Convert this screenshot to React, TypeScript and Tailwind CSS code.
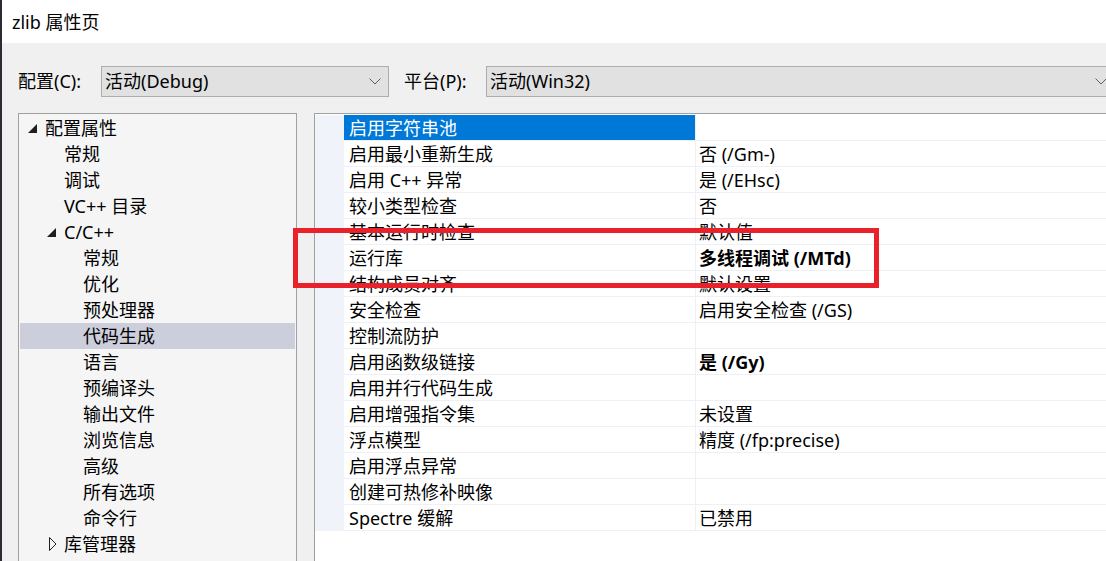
import React from "react";

type TreeItem = { label: string; level: 0 | 1 | 2; arrow?: "open" | "closed"; selected?: boolean };

const tree: TreeItem[] = [
  { label: "配置属性", level: 0, arrow: "open" },
  { label: "常规", level: 1 },
  { label: "调试", level: 1 },
  { label: "VC++ 目录", level: 1 },
  { label: "C/C++", level: 1, arrow: "open" },
  { label: "常规", level: 2 },
  { label: "优化", level: 2 },
  { label: "预处理器", level: 2 },
  { label: "代码生成", level: 2, selected: true },
  { label: "语言", level: 2 },
  { label: "预编译头", level: 2 },
  { label: "输出文件", level: 2 },
  { label: "浏览信息", level: 2 },
  { label: "高级", level: 2 },
  { label: "所有选项", level: 2 },
  { label: "命令行", level: 2 },
  { label: "库管理器", level: 1, arrow: "closed" },
];

const props: { name: string; value: string; bold?: boolean }[] = [
  { name: "启用字符串池", value: "" },
  { name: "启用最小重新生成", value: "否 (/Gm-)" },
  { name: "启用 C++ 异常", value: "是 (/EHsc)" },
  { name: "较小类型检查", value: "否" },
  { name: "基本运行时检查", value: "默认值" },
  { name: "运行库", value: "多线程调试 (/MTd)", bold: true },
  { name: "结构成员对齐", value: "默认设置" },
  { name: "安全检查", value: "启用安全检查 (/GS)" },
  { name: "控制流防护", value: "" },
  { name: "启用函数级链接", value: "是 (/Gy)", bold: true },
  { name: "启用并行代码生成", value: "" },
  { name: "启用增强指令集", value: "未设置" },
  { name: "浮点模型", value: "精度 (/fp:precise)" },
  { name: "启用浮点异常", value: "" },
  { name: "创建可热修补映像", value: "" },
  { name: "Spectre 缓解", value: "已禁用" },
];

const indent = ["pl-[6px]", "pl-[25px]", "pl-[44px]"];

function Chevron() {
  return (
    <svg width="12" height="7" viewBox="0 0 12 7" className="shrink-0">
      <path d="M0.5 0.5 L6 6 L11.5 0.5" fill="none" stroke="#5f5f5f" strokeWidth="1" />
    </svg>
  );
}

function Arrow({ kind }: { kind?: "open" | "closed" }) {
  if (kind === "open") {
    return (
      <svg width="9" height="9" viewBox="0 0 9 9" className="ml-[2px]">
        <polygon points="9,0 9,9 0,9" fill="#1e1e1e" />
      </svg>
    );
  }
  if (kind === "closed") {
    return (
      <svg width="8" height="14" viewBox="0 0 8 14" className="ml-[4px]">
        <polygon points="0.5,0.5 7,7 0.5,13.5" fill="none" stroke="#1e1e1e" strokeWidth="1" />
      </svg>
    );
  }
  return null;
}

export default function App() {
  return (
    <div className="relative flex w-[1106px] h-[561px] overflow-hidden bg-[#f0f0f0] text-black text-[18px] font-['Noto_Sans','Noto_Sans_CJK_SC',sans-serif]">
      {/* desktop edge */}
      <div className="w-[2px] bg-[#2a2d33]" />

      <div className="flex-1 flex flex-col min-w-0">
        {/* TITLE */}
        <div className="h-[43px] shrink-0 bg-white flex items-center pl-[10px] leading-none">
          zlib 属性页
        </div>

        {/* CONFIG ROW */}
        <div className="mt-[23px] h-[31px] shrink-0 flex items-center">
          <span className="w-[99px] pl-[16px] shrink-0 whitespace-nowrap">配置(C):</span>
          <div className="w-[288px] h-full shrink-0 flex items-center justify-between bg-[#e1e1e1] border border-[#adadad] pl-[3px] pr-[7px]">
            <span>活动(Debug)</span>
            <Chevron />
          </div>
          <span className="w-[82px] ml-[15px] shrink-0 whitespace-nowrap">平台(P):</span>
          <div className="w-[629px] h-full shrink-0 flex items-center justify-between bg-[#e1e1e1] border border-[#adadad] pl-[3px] pr-[7px]">
            <span>活动(Win32)</span>
            <Chevron />
          </div>
        </div>

        {/* PANES */}
        <div className="mt-[16px] flex-1 flex min-h-0">
          {/* TREE */}
          <div className="ml-[16px] w-[279px] shrink-0 bg-[#f5f5f5] border-l border-t border-r border-[#a0a0a0] pt-[1px] px-[1px]">
            {tree.map((t, i) => (
              <div
                key={i}
                className={`h-[26px] flex items-center leading-[27px] whitespace-nowrap ${indent[t.level]} ${
                  t.selected ? "bg-[#cccedb]" : ""
                }`}
              >
                <div className="w-[19px] flex items-center shrink-0">
                  <Arrow kind={t.arrow} />
                </div>
                <span className="pt-[1px]">{t.label}</span>
              </div>
            ))}
          </div>

          {/* PROPERTY GRID */}
          <div className="ml-[17px] flex-1 bg-white border-l border-t border-[#a0a0a0] pt-[1px]">
            {props.map((p, i) => (
              <div key={i} className="h-[26px] flex leading-[27px] whitespace-nowrap">
                <div className="w-[29px] shrink-0 bg-[#f0f4fa]" />
                <div
                  className={`w-[352px] shrink-0 pl-[5px] border-r border-b border-[#eef0f4] overflow-hidden ${
                    i === 0 ? "bg-[#0078d7] text-white" : ""
                  }`}
                >
                  {p.name}
                </div>
                <div className={`flex-1 pl-[3px] border-b border-[#eef0f4] overflow-hidden ${p.bold ? "font-bold" : ""}`}>
                  {p.value}
                </div>
              </div>
            ))}
          </div>
        </div>
      </div>

      {/* ANNOTATION */}
      <div className="absolute left-[293px] top-[228px] w-[586px] h-[60px] border-[5px] border-[#e8212a] pointer-events-none" />
    </div>
  );
}
